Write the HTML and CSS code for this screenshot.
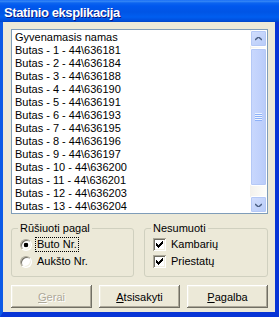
FILE: index.html
```html
<!DOCTYPE html>
<html lang="lt">

<head>
    <title>Statinio eksplikacija</title>
    <meta charset="utf-8">
    <link rel="stylesheet" href="styles.css">
</head>

<body>
    <div class="window">
        <div class="titlebar">
            <span class="title">Statinio eksplikacija</span>
        </div>

        <div class="frame">
            <div class="listbox">
                <ul class="items">
                    <li>Gyvenamasis namas</li>
                    <li>Butas - 1 - 44\636181</li>
                    <li>Butas - 2 - 44\636184</li>
                    <li>Butas - 3 - 44\636188</li>
                    <li>Butas - 4 - 44\636190</li>
                    <li>Butas - 5 - 44\636191</li>
                    <li>Butas - 6 - 44\636193</li>
                    <li>Butas - 7 - 44\636195</li>
                    <li>Butas - 8 - 44\636196</li>
                    <li>Butas - 9 - 44\636197</li>
                    <li>Butas - 10 - 44\636200</li>
                    <li>Butas - 11 - 44\636201</li>
                    <li>Butas - 12 - 44\636203</li>
                    <li>Butas - 13 - 44\636204</li>
                </ul>
                <div class="vscroll">
                    <div class="sbtn">
                        <svg width="7" height="4" viewBox="0 0 7 4"><path d="M0 3l3.5-3 3.5 3" fill="none" stroke="#4d6185" stroke-width="1.6"/></svg>
                    </div>
                    <div class="track">
                        <div class="thumb"><span class="grip"></span></div>
                    </div>
                    <div class="sbtn">
                        <svg width="7" height="4" viewBox="0 0 7 4"><path d="M0 1l3.5 3 3.5-3" fill="none" stroke="#4d6185" stroke-width="1.6"/></svg>
                    </div>
                </div>
            </div>

            <div class="groups">
                <fieldset class="group">
                    <legend>Rūšiuoti pagal</legend>
                    <div class="opt"><span class="radio checked"></span><span class="label focus">Buto Nr.</span></div>
                    <div class="opt"><span class="radio"></span><span class="label">Aukšto Nr.</span></div>
                </fieldset>
                <fieldset class="group">
                    <legend>Nesumuoti</legend>
                    <div class="opt">
                        <span class="check"><svg width="7" height="7" viewBox="0 0 7 7"><path d="M0 2h1v1h1v1h1v-1h1v-1h1v-1h1v-1h1v3h-1v1h-1v1h-1v1h-1v1h-1v-1h-1v-1h-1z"/></svg></span>
                        <span class="label">Kambarių</span>
                    </div>
                    <div class="opt">
                        <span class="check"><svg width="7" height="7" viewBox="0 0 7 7"><path d="M0 2h1v1h1v1h1v-1h1v-1h1v-1h1v-1h1v3h-1v1h-1v1h-1v1h-1v1h-1v-1h-1v-1h-1z"/></svg></span>
                        <span class="label">Priestatų</span>
                    </div>
                </fieldset>
            </div>

            <div class="buttons">
                <button class="btn" disabled><u>G</u>erai</button>
                <button class="btn"><u>A</u>tsisakyti</button>
                <button class="btn"><u>P</u>agalba</button>
            </div>
        </div>
    </div>
</body>

</html>
```

FILE: styles.css
```css
html, body {
    margin: 0;
    padding: 0;
    overflow: hidden;
}

body {
    width: 279px;
    height: 317px;
    font-family: "Liberation Sans", Arial, sans-serif;
    font-size: 11px;
    color: #000;
}

.window {
    display: flex;
    flex-direction: column;
    height: 317px;
}

.titlebar {
    height: 22px;
    flex: none;
    display: flex;
    align-items: center;
    padding-left: 4px;
    background: linear-gradient(to bottom, #0a61f5 0px, #3b8cf7 1px, #0c64f0 3px, #0058ee 6px, #0055e5 12px, #005ef0 17px, #0051e0 20px, #0046c8 22px);
}

.title {
    color: #fff;
    font-weight: bold;
    font-size: 13px;
    letter-spacing: -0.4px;
    text-shadow: 1px 1px #0a1883;
    padding-top: 2px;
}

.frame {
    flex: 1;
    display: flex;
    flex-direction: column;
    background-color: #ece9d8;
    border-left: 3px solid #0c5ae6;
    border-right: 4px solid #0835d6;
    border-bottom: 5px solid #0835d6;
    padding: 7px 7px 4px 8px;
}

/* list with the xp scrollbar */
.listbox {
    height: 185px;
    box-sizing: border-box;
    border: 1px solid #7f9db9;
    background-color: #fff;
    display: flex;
    overflow: hidden;
}

.items {
    flex: 1;
    list-style: none;
    margin: 0;
    padding: 1px 0 0 3px;
    line-height: 13px;
    overflow: hidden;
}

.vscroll {
    width: 17px;
    display: flex;
    flex-direction: column;
    background: linear-gradient(to right, #f3f1ec, #fefefb);
}

.sbtn {
    height: 17px;
    box-sizing: border-box;
    border: 1px solid #fff;
    border-radius: 2px;
    background: linear-gradient(135deg, #d2defd, #b7cbf8);
    box-shadow: inset 0 0 0 1px #b4c8f6;
    display: flex;
    align-items: center;
    justify-content: center;
}

.track {
    flex: 1;
    padding: 1px 0 10px;
    display: flex;
}

.thumb {
    flex: 1;
    box-sizing: border-box;
    border: 1px solid #fff;
    border-radius: 2px;
    background: linear-gradient(to right, #c9d8fd, #c0d1fc 60%, #b8cbf8);
    box-shadow: inset 0 0 0 1px #b4c8f6;
    display: flex;
    align-items: center;
    justify-content: center;
}

.grip {
    width: 7px;
    height: 8px;
    background: repeating-linear-gradient(to bottom, #eef4fe 0 1px, #8cb0f8 1px 2px);
}

/* group boxes */
.groups {
    display: grid;
    grid-template-columns: 123px 124px;
    gap: 10px;
    margin-top: 8px;
}

.group {
    margin: 0;
    padding: 1px 4px 6px 8px;
    border: 1px solid #d0d0bf;
    border-radius: 3px;
    min-width: 0;
}

.group legend {
    padding: 0 2px;
    margin-left: -2px;
    line-height: 13px;
}

.opt {
    height: 17px;
    display: flex;
    align-items: center;
}

.radio {
    width: 10px;
    height: 10px;
    border: 1px solid;
    border-color: #aca899 #fff #fff #aca899;
    border-radius: 50%;
    background-color: #fff;
    box-shadow: inset 1px 1px #716f64, inset -1px -1px #f1efe2;
    margin-right: 3px;
    flex: none;
}

.radio.checked {
    background: radial-gradient(circle, #000 2px, #fff 2.6px);
}

.label {
    border: 1px dotted transparent;
    padding: 0 1px;
    line-height: 13px;
}

.label.focus {
    border-color: #000;
}

.check {
    width: 13px;
    height: 13px;
    box-sizing: border-box;
    background-color: #fff;
    box-shadow: inset 1px 1px #aca899, inset -1px -1px #fff, inset 2px 2px #716f64, inset -2px -2px #f1efe2;
    display: flex;
    align-items: center;
    justify-content: center;
    margin-right: 3px;
    flex: none;
}

.check svg {
    display: block;
    shape-rendering: crispEdges;
}

/* buttons */
.buttons {
    display: grid;
    grid-template-columns: repeat(3, 81px);
    gap: 7px;
    margin-top: 8px;
}

.btn {
    height: 23px;
    padding: 0;
    border: 0;
    background-color: #ece9d8;
    font-family: "Liberation Sans", Arial, sans-serif;
    font-size: 11px;
    color: #000;
    box-shadow: inset -1px -1px #716f64, inset 1px 1px #fff, inset -2px -2px #aca899, inset 2px 2px #f1efe2;
}

.btn:disabled {
    color: #aca899;
    text-shadow: 1px 1px #fff;
}
```
